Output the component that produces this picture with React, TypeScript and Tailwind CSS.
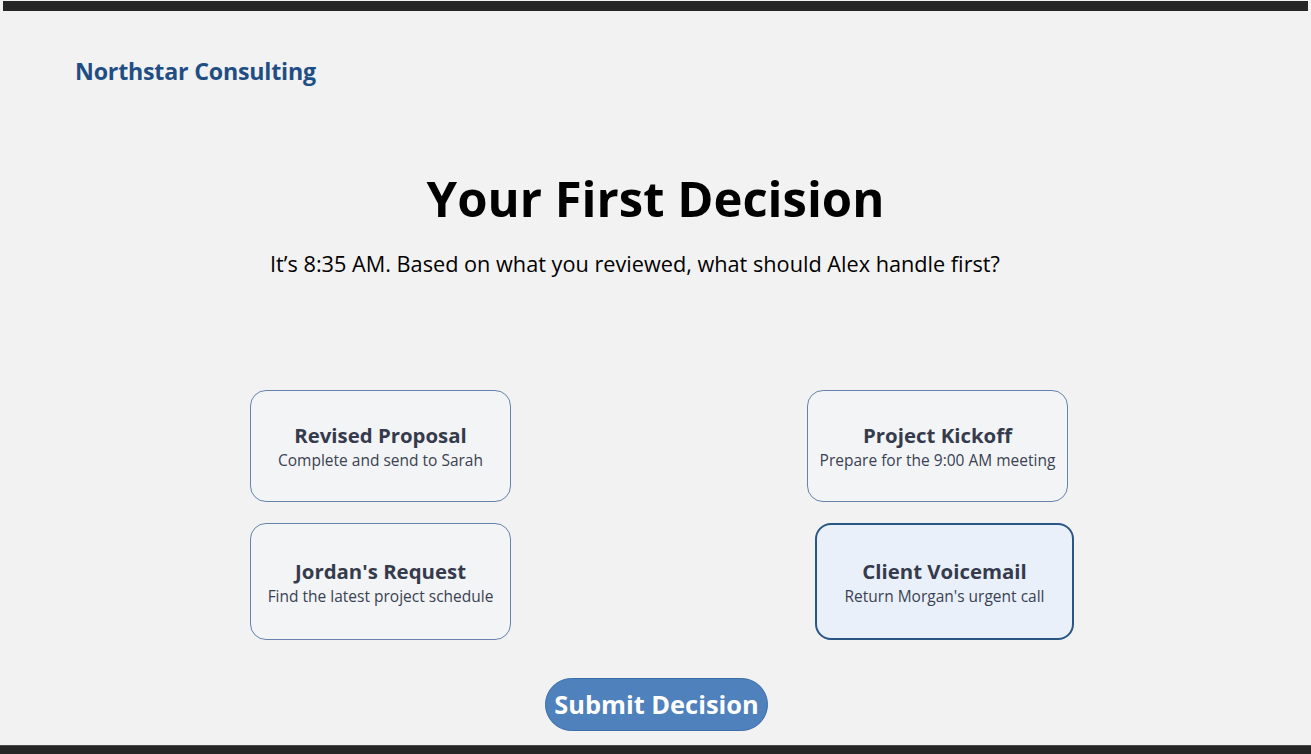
import React from "react";

type Choice = {
  title: string;
  detail: string;
  selected?: boolean;
};

const choices: Choice[] = [
  { title: "Revised Proposal", detail: "Complete and send to Sarah" },
  { title: "Project Kickoff", detail: "Prepare for the 9:00 AM meeting" },
  { title: "Jordan's Request", detail: "Find the latest project schedule" },
  { title: "Client Voicemail", detail: "Return Morgan's urgent call", selected: true },
];

const uiFont = { fontFamily: '"Open Sans", "Noto Sans", sans-serif' };

function ChoiceCard({ choice, tall }: { choice: Choice; tall: boolean }) {
  return (
    <button
      className={`flex flex-col items-center justify-center rounded-[16px] cursor-pointer ${
        tall ? "h-[117px]" : "h-[112px]"
      } ${
        choice.selected
          ? "ml-[8px] w-[259px] border-2 border-[#2a5686] bg-[#e9f0fa]"
          : "w-[261px] border border-[#6683ad] bg-[#f3f4f6]"
      }`}
    >
      <span className="text-[20.4px] leading-[26px] font-bold text-[#353b4c]">{choice.title}</span>
      <span className="mt-[2px] text-[15.5px] leading-[20px] text-[#3a4152]">{choice.detail}</span>
    </button>
  );
}

export default function App() {
  return (
    <div className="w-full h-[754px] flex flex-col bg-[#f2f2f2] overflow-hidden" style={uiFont}>
      {/* top bar */}
      <div className="mt-px mx-[3px] h-[10px] bg-[#262626]" />

      {/* header */}
      <div className="pl-[75px] pt-[45px]">
        <span className="text-[23.2px] leading-[30px] font-bold tracking-[-0.2px] text-[#1f4e84]">
          Northstar Consulting
        </span>
      </div>

      {/* question */}
      <div className="flex flex-col items-center">
        <h1 className="mt-[88px] text-[49px] leading-[48px] font-bold text-black">Your First Decision</h1>
        <p className="mt-[28px] mr-[41px] text-[21.7px] leading-[28px] text-black">
          It’s 8:35 AM. Based on what you reviewed, what should Alex handle first?
        </p>
      </div>

      {/* choices */}
      <div className="mt-[112px] pl-[7px] grid grid-cols-[261px_261px] justify-center gap-x-[296px] gap-y-[21px]">
        {choices.map((c, i) => (
          <ChoiceCard key={c.title} choice={c} tall={i > 1} />
        ))}
      </div>

      <div className="mt-[38px] flex justify-center pl-[2px]">
        <button className="w-[223px] h-[53px] rounded-full bg-[#4f81bd] border border-[#3b6ea8] text-white text-[25.4px] font-bold leading-none cursor-pointer">
          Submit Decision
        </button>
      </div>

      {/* bottom bar */}
      <div className="mt-auto h-[9px] bg-[#262626] border-t border-[#4a4a4a]" />
    </div>
  );
}
